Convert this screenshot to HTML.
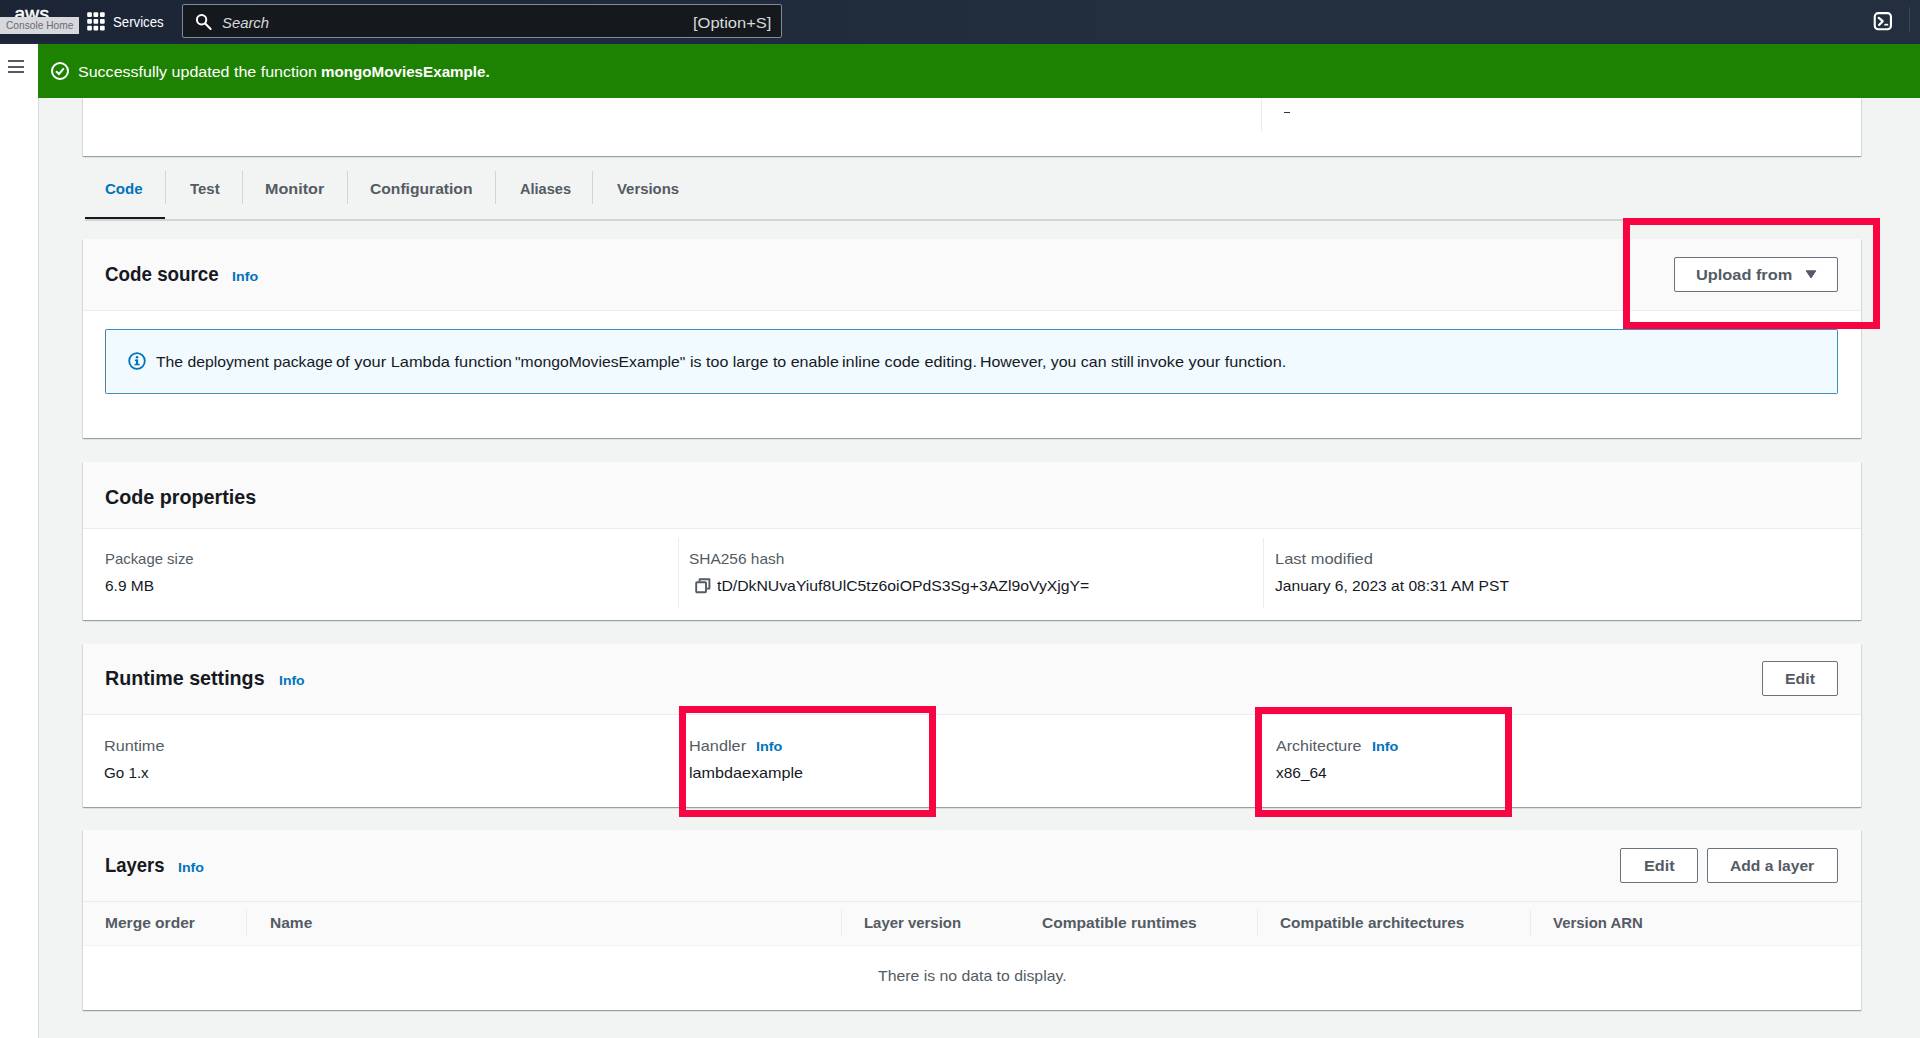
<!DOCTYPE html>
<html>
<head>
<meta charset="utf-8">
<title>Lambda</title>
<style>
*{box-sizing:border-box;margin:0;padding:0}
html,body{width:1920px;height:1038px;overflow:hidden;background:#f2f3f3;font-family:"Liberation Sans",sans-serif;color:#16191f}
.abs{position:absolute}
.t{position:absolute;white-space:nowrap;line-height:1;transform-origin:0 0;font-family:"Liberation Sans",sans-serif}
#nav{left:0;top:0;width:1920px;height:44px;background:linear-gradient(90deg,#1b2536 0,#1d283a 500px,#232f3e 1100px,#232f3e 100%)}
#side{left:0;top:44px;width:39px;height:994px;background:#fff;border-right:1px solid #d5dbdb}
#flash{left:38px;top:44px;width:1882px;height:54px;background:#1d8102}
.card{position:absolute;left:83px;width:1778px;background:#fff;box-shadow:0 1px 1px 0 rgba(0,28,36,.28),1px 1px 1px 0 rgba(0,28,36,.07),-1px 1px 1px 0 rgba(0,28,36,.07)}
.hd{position:absolute;left:0;top:0;width:100%;background:#fafafa;border-bottom:1px solid #eaeded}
.btn{position:absolute;border:1px solid #69717a;border-radius:2px;background:#fff}
.vdiv{position:absolute;width:1px;background:#eaeded}
.red{position:absolute;border:7px solid #f70543}
</style>
</head>
<body>
<div id="nav" class="abs">
  <div class="t" style="left:14.5px;top:3.5px;font-size:19px;color:#fff;-webkit-text-stroke:.5px #fff;letter-spacing:.3px">aws</div>
  <div class="abs" style="left:0;top:17px;width:79px;height:17px;background:#d7d8dc;border:0"></div>
  <svg class="abs" style="left:87px;top:12px" width="19" height="19" viewBox="0 0 19 19"><g fill="#fff"><rect x="0.2" y="0.2" width="4.7" height="4.7" rx="1"/><rect x="6.5" y="0.2" width="4.7" height="4.7" rx="1"/><rect x="13.0" y="0.2" width="4.7" height="4.7" rx="1"/><rect x="0.2" y="6.95" width="4.7" height="4.7" rx="1"/><rect x="6.5" y="6.95" width="4.7" height="4.7" rx="1"/><rect x="13.0" y="6.95" width="4.7" height="4.7" rx="1"/><rect x="0.2" y="13.7" width="4.7" height="4.7" rx="1"/><rect x="6.5" y="13.7" width="4.7" height="4.7" rx="1"/><rect x="13.0" y="13.7" width="4.7" height="4.7" rx="1"/></g></svg>
  <div class="abs" style="left:182px;top:4px;width:600px;height:34px;background:#15181d;border:1px solid #818c9a;border-radius:2px"></div>
  <svg class="abs" style="left:194px;top:12px" width="20" height="20" viewBox="0 0 20 20"><circle cx="7.6" cy="7.8" r="4.7" fill="none" stroke="#fff" stroke-width="2"/><path d="M11.2 11.6 L16.6 17" stroke="#fff" stroke-width="2.1" stroke-linecap="round"/></svg>
  <svg class="abs" style="left:1873px;top:12px" width="20" height="20" viewBox="0 0 20 20"><rect x="1.75" y="1.15" width="16.2" height="16.1" rx="3.4" fill="none" stroke="#fff" stroke-width="2.1"/><path d="M5.8 5.8 L9.7 9.2 L6.1 13" fill="none" stroke="#fff" stroke-width="2.2" stroke-linecap="round" stroke-linejoin="round"/><path d="M11.3 12.7 H15.2" stroke="#fff" stroke-width="1.7"/></svg>
  <div class="abs" style="left:0;top:40px;width:1920px;height:4px;background:linear-gradient(rgba(34,40,74,0),rgba(34,40,74,.8))"></div>
  <div class="abs" style="left:1909px;top:7px;width:1px;height:25px;background:#3b4757"></div>
</div>
<div id="side" class="abs">
  <div class="abs" style="left:8px;top:16px;width:16px;height:2px;background:#545b64"></div>
  <div class="abs" style="left:8px;top:21.5px;width:16px;height:2px;background:#545b64"></div>
  <div class="abs" style="left:8px;top:27px;width:16px;height:2px;background:#545b64"></div>
</div>
<div id="flash" class="abs">
  <svg class="abs" style="left:12px;top:17px" width="20" height="20" viewBox="0 0 20 20"><circle cx="10" cy="10" r="8" fill="none" stroke="#fff" stroke-width="2"/><path d="M6 10.3 L9 13 L13.8 7.4" fill="none" stroke="#fff" stroke-width="2"/></svg>
</div>

<!-- top partial card -->
<div class="card" style="top:98px;height:58px">
  <div class="vdiv" style="left:1178px;top:0;height:34px"></div>
  <div class="abs" style="left:1201px;top:13.5px;width:5.5px;height:1.2px;background:#30343a"></div>
</div>

<!-- tabs -->
<div class="abs" style="left:85px;top:219px;width:1776px;height:1.5px;background:#d0d4d4"></div>
<div class="abs" style="left:85px;top:217px;width:80px;height:2px;background:#16191f"></div>
<div class="vdiv" style="left:165px;top:171px;height:33px;background:#d0d5d5"></div>
<div class="vdiv" style="left:242px;top:171px;height:33px;background:#d0d5d5"></div>
<div class="vdiv" style="left:347px;top:171px;height:33px;background:#d0d5d5"></div>
<div class="vdiv" style="left:495px;top:171px;height:33px;background:#d0d5d5"></div>
<div class="vdiv" style="left:592px;top:171px;height:33px;background:#d0d5d5"></div>

<!-- Code source -->
<div class="card" style="top:239px;height:199px">
  <div class="hd" style="height:72px"></div>
  <div class="btn" style="left:1591px;top:18px;width:164px;height:35px"></div>
  <svg class="abs" style="left:1722px;top:31px" width="12" height="9" viewBox="0 0 12 9"><path d="M1.2 .8 H10.8 L6 8 Z" fill="#545b64" stroke="#545b64" stroke-width="1" stroke-linejoin="round"/></svg>
  <div class="abs" style="left:22px;top:90px;width:1733px;height:65px;background:#f1faff;border:1px solid #3f8fc6;border-left-color:#55819c;border-radius:2px"></div>
  <svg class="abs" style="left:45px;top:113px" width="18" height="18" viewBox="0 0 18 18"><circle cx="9" cy="9" r="7.8" fill="none" stroke="#0073bb" stroke-width="1.8"/><rect x="8" y="7.6" width="2.1" height="5.4" fill="#0073bb"/><rect x="6.8" y="7.6" width="3.3" height="1.5" fill="#0073bb"/><rect x="6.6" y="11.8" width="5" height="1.5" fill="#0073bb"/><circle cx="9" cy="5.2" r="1.25" fill="#0073bb"/></svg>
</div>

<!-- Code properties -->
<div class="card" style="top:462px;height:158px">
  <div class="hd" style="height:67px"></div>
  <div class="vdiv" style="left:595px;top:76px;height:70px"></div>
  <div class="vdiv" style="left:1180px;top:76px;height:70px"></div>
  <svg class="abs" style="left:612px;top:116px" width="16" height="16" viewBox="0 0 16 16"><path d="M4.6 3.6 V1.3 H14.4 V10.6 H11.6" fill="none" stroke="#545b64" stroke-width="1.9" stroke-linejoin="round"/><rect x="1.2" y="4.2" width="9.8" height="10" rx=".8" fill="#fff" stroke="#545b64" stroke-width="1.9"/></svg>
</div>

<!-- Runtime settings -->
<div class="card" style="top:644px;height:163px">
  <div class="hd" style="height:71px"></div>
  <div class="btn" style="left:1679px;top:17px;width:76px;height:35px"></div>
</div>

<!-- Layers -->
<div class="card" style="top:830px;height:180px">
  <div class="hd" style="height:72px"></div>
  <div class="btn" style="left:1537px;top:18px;width:78px;height:35px"></div>
  <div class="btn" style="left:1624px;top:18px;width:131px;height:35px"></div>
  <div class="abs" style="left:0;top:72px;width:1778px;height:44px;background:#fafafa;border-bottom:1px solid #f3f4f4"></div>
  <div class="vdiv" style="left:163px;top:80px;height:26px"></div>
  <div class="vdiv" style="left:758px;top:80px;height:26px"></div>
  <div class="vdiv" style="left:1174px;top:80px;height:26px"></div>
  <div class="vdiv" style="left:1447px;top:80px;height:26px"></div>
</div>

<div class="t" style="left:113.06px;top:15.00px;font-size:14px;color:#ffffff;transform:scaleX(0.9423)">Services</div>
<div class="t" style="left:221.51px;top:14.50px;font-size:15px;color:#d5dbdb;transform:scaleX(0.9891);font-style:italic">Search</div>
<div class="t" style="left:692.65px;top:14.50px;font-size:15px;color:#d5dbdb;transform:scaleX(1.1000)">[Option+S]</div>
<div class="t" style="left:5.50px;top:20.00px;font-size:10.5px;color:#6a6a70;transform:scaleX(0.9710)">Console Home</div>
<div class="t" style="left:77.68px;top:64.00px;font-size:15px;color:#ffffff;transform:scaleX(1.0687)">Successfully updated the function</div>
<div class="t" style="left:320.99px;top:64.00px;font-size:15px;color:#ffffff;transform:scaleX(1.0121);font-weight:bold">mongoMoviesExample.</div>
<div class="t" style="left:105.40px;top:180.50px;font-size:15px;color:#0073bb;transform:scaleX(1.0028);font-weight:bold">Code</div>
<div class="t" style="left:189.60px;top:180.50px;font-size:15px;color:#545b64;transform:scaleX(0.9967);font-weight:bold">Test</div>
<div class="t" style="left:265.22px;top:180.50px;font-size:15px;color:#545b64;transform:scaleX(1.0759);font-weight:bold">Monitor</div>
<div class="t" style="left:370.36px;top:180.50px;font-size:15px;color:#545b64;transform:scaleX(1.0423);font-weight:bold">Configuration</div>
<div class="t" style="left:519.60px;top:180.50px;font-size:15px;color:#545b64;transform:scaleX(0.9712);font-weight:bold">Aliases</div>
<div class="t" style="left:616.90px;top:180.50px;font-size:15px;color:#545b64;transform:scaleX(0.9919);font-weight:bold">Versions</div>
<div class="t" style="left:105.03px;top:264.60px;font-size:19.3px;color:#16191f;transform:scaleX(0.9739);font-weight:bold">Code source</div>
<div class="t" style="left:231.89px;top:270.60px;font-size:12.8px;color:#0073bb;transform:scaleX(1.1136);font-weight:bold">Info</div>
<div class="t" style="left:1696.11px;top:267.00px;font-size:15px;color:#545b64;transform:scaleX(1.0897);font-weight:bold">Upload from</div>
<div class="t" style="left:155.50px;top:353.60px;font-size:15px;color:#16191f;transform:scaleX(1.0488)">The deployment package</div>
<div class="t" style="left:335.91px;top:353.60px;font-size:15px;color:#16191f;transform:scaleX(1.0931)">of your Lambda function</div>
<div class="t" style="left:515.25px;top:353.60px;font-size:15px;color:#16191f;transform:scaleX(1.0497)">&quot;mongoMoviesExample&quot;</div>
<div class="t" style="left:689.73px;top:353.60px;font-size:15px;color:#16191f;transform:scaleX(1.0688)">is too large to enable</div>
<div class="t" style="left:842.21px;top:353.60px;font-size:15px;color:#16191f;transform:scaleX(1.0861)">inline code editing.</div>
<div class="t" style="left:980.24px;top:353.60px;font-size:15px;color:#16191f;transform:scaleX(1.0608)">However, you can still</div>
<div class="t" style="left:1137.22px;top:353.60px;font-size:15px;color:#16191f;transform:scaleX(1.0846)">invoke your function.</div>
<div class="t" style="left:104.73px;top:487.60px;font-size:19.3px;color:#16191f;transform:scaleX(1.0223);font-weight:bold">Code properties</div>
<div class="t" style="left:104.61px;top:551.20px;font-size:15px;color:#545b64;transform:scaleX(0.9932)">Package size</div>
<div class="t" style="left:104.57px;top:577.70px;font-size:15px;color:#16191f;transform:scaleX(1.0304)">6.9 MB</div>
<div class="t" style="left:689.47px;top:551.20px;font-size:15px;color:#545b64;transform:scaleX(1.0302)">SHA256 hash</div>
<div class="t" style="left:717.00px;top:577.70px;font-size:15px;color:#16191f;transform:scaleX(1.0516)">tD/DkNUvaYiuf8UlC5tz6oiOPdS3Sg+3AZl9oVyXjgY=</div>
<div class="t" style="left:1274.65px;top:551.20px;font-size:15px;color:#545b64;transform:scaleX(1.0977)">Last modified</div>
<div class="t" style="left:1275.00px;top:577.70px;font-size:15px;color:#16191f;transform:scaleX(1.0389)">January 6, 2023 at 08:31 AM PST</div>
<div class="t" style="left:105.23px;top:669.00px;font-size:19.3px;color:#16191f;transform:scaleX(1.0203);font-weight:bold">Runtime settings</div>
<div class="t" style="left:278.91px;top:675.00px;font-size:12.8px;color:#0073bb;transform:scaleX(1.0909);font-weight:bold">Info</div>
<div class="t" style="left:1784.64px;top:671.00px;font-size:15px;color:#545b64;transform:scaleX(1.0556);font-weight:bold">Edit</div>
<div class="t" style="left:104.42px;top:737.75px;font-size:15px;color:#545b64;transform:scaleX(1.0815)">Runtime</div>
<div class="t" style="left:104.49px;top:764.60px;font-size:15px;color:#16191f;transform:scaleX(1.0116)">Go 1.x</div>
<div class="t" style="left:689.31px;top:737.75px;font-size:15px;color:#545b64;transform:scaleX(1.0863)">Handler</div>
<div class="t" style="left:756.37px;top:740.75px;font-size:12.8px;color:#0073bb;transform:scaleX(1.1273);font-weight:bold">Info</div>
<div class="t" style="left:689.32px;top:764.60px;font-size:15px;color:#16191f;transform:scaleX(1.0769)">lambdaexample</div>
<div class="t" style="left:1275.50px;top:737.75px;font-size:15px;color:#545b64;transform:scaleX(1.0688)">Architecture</div>
<div class="t" style="left:1371.87px;top:740.75px;font-size:12.8px;color:#0073bb;transform:scaleX(1.1273);font-weight:bold">Info</div>
<div class="t" style="left:1275.50px;top:764.60px;font-size:15px;color:#16191f;transform:scaleX(1.0306)">x86_64</div>
<div class="t" style="left:105.04px;top:855.90px;font-size:19.3px;color:#16191f;transform:scaleX(0.9574);font-weight:bold">Layers</div>
<div class="t" style="left:178.29px;top:861.90px;font-size:12.8px;color:#0073bb;transform:scaleX(1.1068);font-weight:bold">Info</div>
<div class="t" style="left:1643.61px;top:858.00px;font-size:15px;color:#545b64;transform:scaleX(1.0852);font-weight:bold">Edit</div>
<div class="t" style="left:1730.00px;top:858.00px;font-size:15px;color:#545b64;transform:scaleX(1.0407);font-weight:bold">Add a layer</div>
<div class="t" style="left:104.56px;top:915.30px;font-size:15px;color:#545b64;transform:scaleX(1.0366);font-weight:bold">Merge order</div>
<div class="t" style="left:269.56px;top:915.30px;font-size:15px;color:#545b64;transform:scaleX(1.0350);font-weight:bold">Name</div>
<div class="t" style="left:864.01px;top:915.30px;font-size:15px;color:#545b64;transform:scaleX(0.9948);font-weight:bold">Layer version</div>
<div class="t" style="left:1042.21px;top:915.30px;font-size:15px;color:#545b64;transform:scaleX(1.0372);font-weight:bold">Compatible runtimes</div>
<div class="t" style="left:1279.98px;top:915.30px;font-size:15px;color:#545b64;transform:scaleX(1.0240);font-weight:bold">Compatible architectures</div>
<div class="t" style="left:1552.70px;top:915.30px;font-size:15px;color:#545b64;transform:scaleX(0.9956);font-weight:bold">Version ARN</div>
<div class="t" style="left:878.00px;top:967.75px;font-size:15px;color:#545b64;transform:scaleX(1.0534)">There is no data to display.</div>

<!-- red highlight boxes -->
<div class="red" style="left:1623px;top:218px;width:257px;height:111px"></div>
<div class="red" style="left:679px;top:706px;width:257px;height:111px"></div>
<div class="red" style="left:1255px;top:707px;width:257px;height:110px"></div>
</body>
</html>
